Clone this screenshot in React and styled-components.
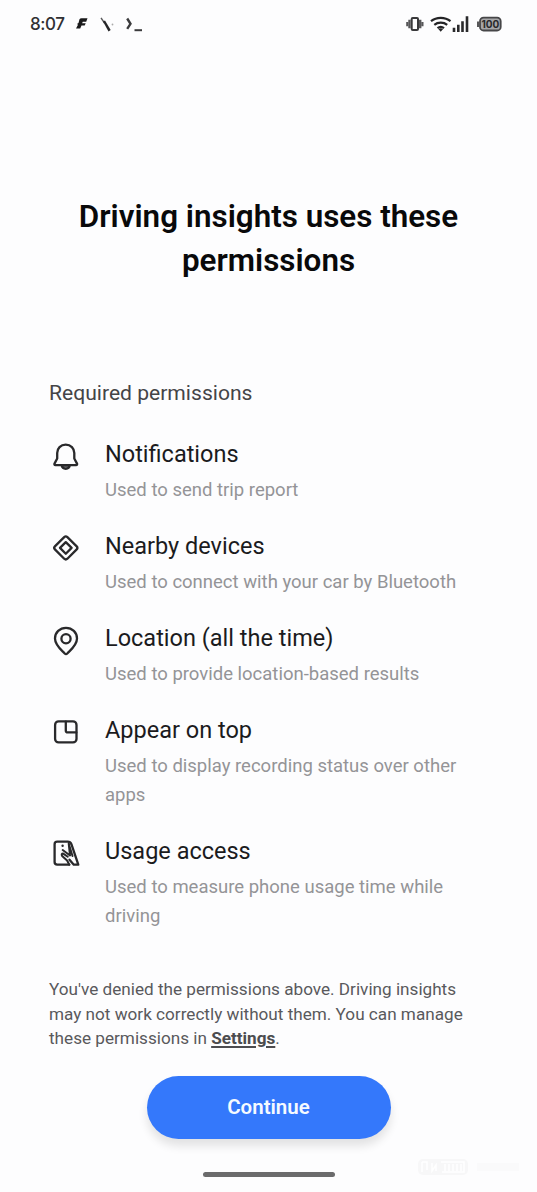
import React from 'react';
import styled, { createGlobalStyle } from 'styled-components';

const GlobalStyle = createGlobalStyle`
  * { box-sizing: border-box; }
  body { margin: 0; background: #fdfdfe; }
`;

const Screen = styled.main`
  position: relative;
  display: flex;
  flex-direction: column;
  width: 537px;
  height: 1192px;
  overflow: hidden;
  background: #fdfdfe;
  color: #1b1b1d;
  font-family: Roboto, sans-serif;
`;

const StatusBar = styled.header`
  display: flex;
  align-items: center;
  justify-content: space-between;
  height: 48px;
  padding: 0 35px 0 30px;
`;

const StatusGroup = styled.div`
  display: flex;
  align-items: center;
  gap: ${({ $gap }) => $gap}px;
`;

const Clock = styled.span`
  width: 35px;
  font: 500 17px/24px Inter, sans-serif;
  letter-spacing: -0.4px;
  white-space: nowrap;
  color: #303032;
`;

const Title = styled.h1`
  margin: 147px 0 0;
  text-align: center;
  font-size: 31.4px;
  font-weight: 600;
  line-height: 44px;
  color: #09090a;
`;

const SectionLabel = styled.h2`
  margin: 95px 0 0;
  padding-left: 49px;
  font-size: 21.1px;
  font-weight: 400;
  line-height: 30px;
  color: #444447;
`;

const PermissionList = styled.ul`
  display: flex;
  flex-direction: column;
  gap: 27.7px;
  margin: 32px 0 0;
  padding: 0 49px;
  list-style: none;
`;

const PermissionItem = styled.li`
  display: flex;
  gap: 22px;
`;

const IconSlot = styled.div`
  width: 34px;
  height: 34px;
  svg { display: block; }
`;

const PermissionText = styled.div`
  width: 375px;
`;

const PermissionName = styled.h3`
  margin: 0 0 6px;
  font-size: 23.5px;
  font-weight: 400;
  line-height: 29px;
`;

const PermissionHint = styled.p`
  margin: 0;
  padding-top: 0.6px;
  margin-bottom: -0.6px;
  font-size: 18.5px;
  line-height: 29.3px;
  color: #949497;
`;

const Footnote = styled.p`
  margin: 46.4px 0 0;
  padding-left: 49px;
  font-size: 17.15px;
  line-height: 24.5px;
  color: #59595c;
`;

const SettingsLink = styled.a`
  font-weight: 700;
  text-decoration: underline;
  text-decoration-thickness: 2px;
  text-underline-offset: 2px;
  color: #4c4c4f;
`;

const ContinueButton = styled.button`
  align-self: center;
  width: 244px;
  height: 63px;
  margin-top: 25.6px;
  padding: 0;
  border: 0;
  border-radius: 32px;
  background: #3478fb;
  box-shadow: 0 7px 10px rgba(0, 0, 0, 0.11);
  color: #f5faff;
  font: 600 20.5px/63px Roboto, sans-serif;
`;

const HomeIndicator = styled.div`
  align-self: center;
  width: 132px;
  height: 5px;
  margin-top: 33px;
  border-radius: 3px;
  background: #6b6b6c;
`;

const Watermark = styled.svg`
  position: absolute;
  left: 415px;
  top: 1155px;
`;

const LineIcon = ({ children }) => (
  <svg width="34" height="34" viewBox="0 0 34 34" fill="none" stroke="#29292b" strokeWidth="2.300" strokeLinecap="round" strokeLinejoin="round">
    {children}
  </svg>
);

const BellIcon = () => (
  <LineIcon>
    <path d="M16.700 4.700c-5.100 0-8.500 3.700-8.500 8.400v5.400l-2.700 5.100c-.4.8 0 1.500.9 1.500h20.700c.9 0 1.300-.7.9-1.500l-2.700-5.100v-5.400c0-4.700-3.500-8.400-8.600-8.400Z" />
    <path d="M12.700 25.400c.8 4.500 7.300 4.500 8.100 0Z" fill="#77777a" />
  </LineIcon>
);

const NearbyIcon = () => (
  <LineIcon>
    <path d="M15.200 5.100q1.600-1.500 3.200 0l9.300 9.300q1.500 1.500 0 3l-9.300 9.300q-1.600 1.500-3.200 0l-9.300-9.300q-1.500-1.500 0-3Z" />
    <path d="m16.800 10.100 5.800 5.800-5.800 5.800-5.800-5.800Z" />
  </LineIcon>
);

const LocationIcon = () => (
  <LineIcon>
    <path d="M17 3.800c-6.200 0-11 4.500-11 10.700 0 6.500 5.800 11 9.700 15q1.300 1.300 2.600 0c3.900-4 9.700-8.500 9.700-15 0-6.200-4.800-10.700-11-10.700Z" />
    <circle cx="17" cy="14.700" r="4.600" />
  </LineIcon>
);

const OverlayIcon = () => (
  <LineIcon>
    <rect x="6.100" y="5.400" width="21.400" height="21" rx="3.500" />
    <path d="M16.800 5.600v8.800q0 2 2 2h8.500" />
  </LineIcon>
);

const UsageIcon = () => (
  <LineIcon>
    <path d="M20.300 27.700H8.200q-2.600 0-2.600-2.600V7.300q0-2.600 2.600-2.600h10.500q2.700 0 3.700 2.500l6.900 20.500h-4.500l-4.300-5" />
    <path d="m20.300 27.700-2.200-4.200-5-4.600q-1.200-2.400 1.100-2.300l4.600 3.200" strokeWidth="2" />
    <path d="m13.700 13 7.300 5.500-1.300-12 3.800 12.500" strokeWidth="2" />
    <circle cx="13.600" cy="8.800" r="1.200" fill="#29292b" stroke="none" />
  </LineIcon>
);

const permissions = [
  { name: 'Notifications', hint: 'Used to send trip report', Icon: BellIcon },
  { name: 'Nearby devices', hint: 'Used to connect with your car by Bluetooth', Icon: NearbyIcon },
  { name: 'Location (all the time)', hint: 'Used to provide location-based results', Icon: LocationIcon },
  { name: 'Appear on top', hint: 'Used to display recording status over other apps', Icon: OverlayIcon },
  { name: 'Usage access', hint: 'Used to measure phone usage time while driving', Icon: UsageIcon },
];

const AppGlyphs = () => (
  <svg width="70" height="24" viewBox="0 0 70 24" fill="none">
    <path d="M3.500 7.200q.5-1 2-1h6l-1.300 3.600H6.800l-.7 1.500h3.600l-1 2.300H5.500L4.200 16.500H0l2-3.800-1-.7 1.500-1Z" fill="#19191a" />
    <path d="m25 5.800 3.500 5.200" stroke="#5a5a5c" strokeWidth="1.400" />
    <path d="m27 9.500 2-1 5.700 9.500-2.200 1.500Z" fill="#252527" />
    <circle cx="36.500" cy="12.500" r=".9" fill="#aaa" />
    <path d="m51.200 6.500 3.300 5.300-3.300 5" stroke="#3b3b3d" strokeWidth="2.400" />
    <path d="M58.500 18.200H66" stroke="#3b3b3d" strokeWidth="2" />
  </svg>
);

const DeviceStatus = () => (
  <svg width="97" height="24" viewBox="0 0 97 24" fill="none">
    <rect x="6.700" y="5.900" width="6.300" height="12.200" rx="1" stroke="#39393b" strokeWidth="2" />
    <path d="M4.500 7.800v8.400M15.200 7.800v8.400" stroke="#565658" strokeWidth="2.400" />
    <path d="M2.300 10v4.200M17.400 10v4.200" stroke="#565658" strokeWidth="2.200" />
    <path d="M26 9.200c5.500-4.500 14-4.500 19.500 0M29.300 12.800c3.600-2.900 9.300-2.900 12.900 0M32.500 16.200c2-1.600 4.500-1.600 6.500 0" stroke="#242426" strokeWidth="2.200" />
    <path d="m33.300 17.100 2.400 2.600 2.400-2.600q-2.200-1.700-4.800 0Z" fill="#242426" />
    <path d="M49 15.800V20M53.300 12.700V20M57.500 9.200V20M62 4.200V20" stroke="#29292b" strokeWidth="2.600" />
    <rect x="75" y="5.600" width="20.700" height="12.900" rx="3.600" fill="#a6a6a8" stroke="#464648" strokeWidth="1.800" />
    <path d="M73 9.500v5.500" stroke="#464648" strokeWidth="1.800" />
    <text x="85.400" y="15.900" textAnchor="middle" fontFamily="Inter, sans-serif" fontSize="10" fontWeight="700" fill="#29292b">100</text>
  </svg>
);

export default function App() {
  return (
    <>
      <GlobalStyle />
      <Screen>
        <StatusBar>
          <StatusGroup $gap={11}>
            <Clock>8:07</Clock>
            <AppGlyphs />
          </StatusGroup>
          <StatusGroup $gap={0}>
            <DeviceStatus />
          </StatusGroup>
        </StatusBar>
        <Title>Driving insights uses these<br />permissions</Title>
        <SectionLabel>Required permissions</SectionLabel>
        <PermissionList>
          {permissions.map(({ name, hint, Icon }) => (
            <PermissionItem key={name}>
              <IconSlot><Icon /></IconSlot>
              <PermissionText>
                <PermissionName>{name}</PermissionName>
                <PermissionHint>{hint}</PermissionHint>
              </PermissionText>
            </PermissionItem>
          ))}
        </PermissionList>
        <Footnote>
          You've denied the permissions above. Driving insights<br />
          may not work correctly without them. You can manage<br />
          these permissions in <SettingsLink>Settings</SettingsLink>.
        </Footnote>
        <ContinueButton>Continue</ContinueButton>
        <HomeIndicator />
        <Watermark width="110" height="24" viewBox="0 0 110 24" fill="none" aria-hidden="true">
          <rect x="3" y="4" width="50" height="16" rx="5" fill="#f7f7f8" />
          <path d="M7 7v10M7 7h5v8M17 8v8l4-6v6M26 7h23v10H27M30 9v7M34 9v7M38 9v7M42 9v7M46 9v7" stroke="#fff" strokeWidth="1.500" />
          <path d="M62 8h42v8H62Z" fill="#fafafb" />
        </Watermark>
      </Screen>
    </>
  );
}
